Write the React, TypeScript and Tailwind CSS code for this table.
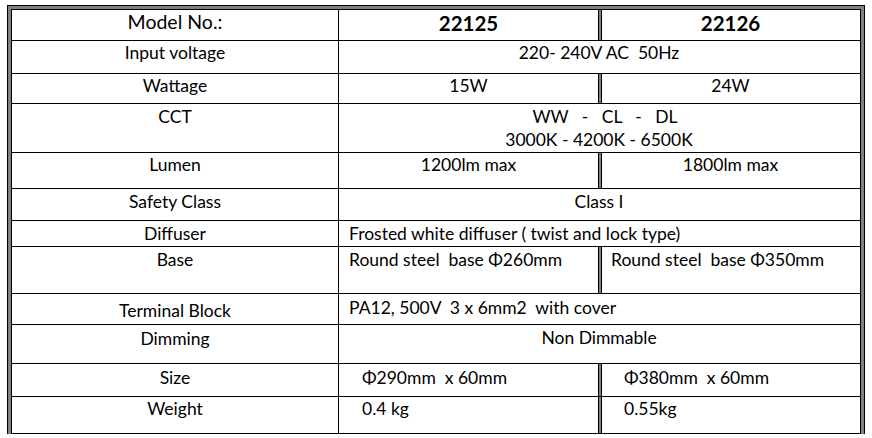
import type { ReactNode } from "react";

type Cell = {
  text: ReactNode;
  align?: "center" | "left";
  pt?: string;
  pl?: string;
  bold?: boolean;
};

type RowProps = {
  h: string;
  label: ReactNode;
  labelPt?: string;
  big?: boolean;
  merged?: Cell;
  left?: Cell;
  right?: Cell;
};

const cellClass = (c: Cell) =>
  [
    "whitespace-pre",
    c.align === "left" ? "text-left" : "text-center",
    c.pt ?? "pt-0",
    c.pl ?? "",
    c.bold ? "font-bold text-[20.5px]" : "",
  ].join(" ");

const Row = ({ h, label, labelPt, big, merged, left, right }: RowProps) => (
  <div className={`flex border-b border-black ${h}`}>
    <div
      className={`w-[327px] shrink-0 border-r border-black text-center ${labelPt ?? "pt-0"} ${
        big ? "text-[19.5px]" : ""
      }`}
    >
      {label}
    </div>
    {merged ? (
      <div className={`w-[520px] shrink-0 ${cellClass(merged)}`}>{merged.text}</div>
    ) : (
      <>
        <div className={`w-[259px] shrink-0 ${cellClass(left!)}`}>{left!.text}</div>
        <div className="w-[4px] shrink-0 border-x border-black bg-[#808080]" />
        <div className={`w-[257px] shrink-0 ${cellClass(right!)}`}>{right!.text}</div>
      </>
    )}
  </div>
);

export default function App() {
  return (
    <div className="min-h-screen bg-white pl-[7px] pt-[5px] font-['Lato','Liberation_Sans',sans-serif] text-[17.5px] leading-[23px] text-black">
      <div className="w-[858px] border-x border-t border-black">
        <div className="border-x-[3px] border-t-[3px] border-[#808080]">
          <div className="border-x border-t border-black">
            <Row
              h="h-[31px]"
              label="Model No.:"
              big
              left={{ text: "22125", bold: true, pt: "pt-[2px]" }}
              right={{ text: "22126", bold: true, pt: "pt-[2px]" }}
            />
            <Row h="h-[33px]" label="Input voltage" merged={{ text: "220- 240V AC  50Hz" }} />
            <Row h="h-[30px]" label="Wattage" left={{ text: "15W" }} right={{ text: "24W" }} />
            <Row
              h="h-[49px]"
              label="CCT"
              labelPt="pt-[1px]"
              merged={{
                text: (
                  <>
                    <span className="block pl-[12px]">{"WW   -   CL   -   DL"}</span>
                    <span className="block">3000K - 4200K - 6500K</span>
                  </>
                ),
                pt: "pt-[1px]",
              }}
            />
            <Row
              h="h-[36px]"
              label="Lumen"
              left={{ text: "1200lm max" }}
              right={{ text: "1800lm max" }}
            />
            <Row
              h="h-[32px]"
              label="Safety Class"
              labelPt="pt-[1px]"
              merged={{ text: "Class I", pt: "pt-[1px]" }}
            />
            <Row
              h="h-[26px]"
              label="Diffuser"
              labelPt="pt-[1px]"
              merged={{
                text: "Frosted white diffuser ( twist and lock type)",
                align: "left",
                pt: "pt-[1px]",
                pl: "pl-[10px]",
              }}
            />
            <Row
              h="h-[47px]"
              label="Base"
              labelPt="pt-[1px]"
              left={{ text: "Round steel  base Φ260mm", align: "left", pt: "pt-[1px]", pl: "pl-[10px]" }}
              right={{ text: "Round steel  base Φ350mm", align: "left", pt: "pt-[1px]", pl: "pl-[9px]" }}
            />
            <Row
              h="h-[31px]"
              label="Terminal Block"
              labelPt="pt-[5px]"
              merged={{
                text: "PA12, 500V  3 x 6mm2  with cover",
                align: "left",
                pt: "pt-[2px]",
                pl: "pl-[10px]",
              }}
            />
            <Row
              h="h-[39px]"
              label="Dimming"
              labelPt="pt-[2px]"
              merged={{ text: "Non Dimmable", pt: "pt-[1px]" }}
            />
            <Row
              h="h-[33px]"
              label="Size"
              labelPt="pt-[2px]"
              left={{ text: "Φ290mm  x 60mm", align: "left", pt: "pt-[2px]", pl: "pl-[23px]" }}
              right={{ text: "Φ380mm  x 60mm", align: "left", pt: "pt-[2px]", pl: "pl-[22px]" }}
            />
            <Row
              h="h-[37px]"
              label="Weight"
              left={{ text: "0.4 kg", align: "left", pl: "pl-[23px]" }}
              right={{ text: "0.55kg", align: "left", pl: "pl-[22px]" }}
            />
          </div>
        </div>
      </div>
    </div>
  );
}
